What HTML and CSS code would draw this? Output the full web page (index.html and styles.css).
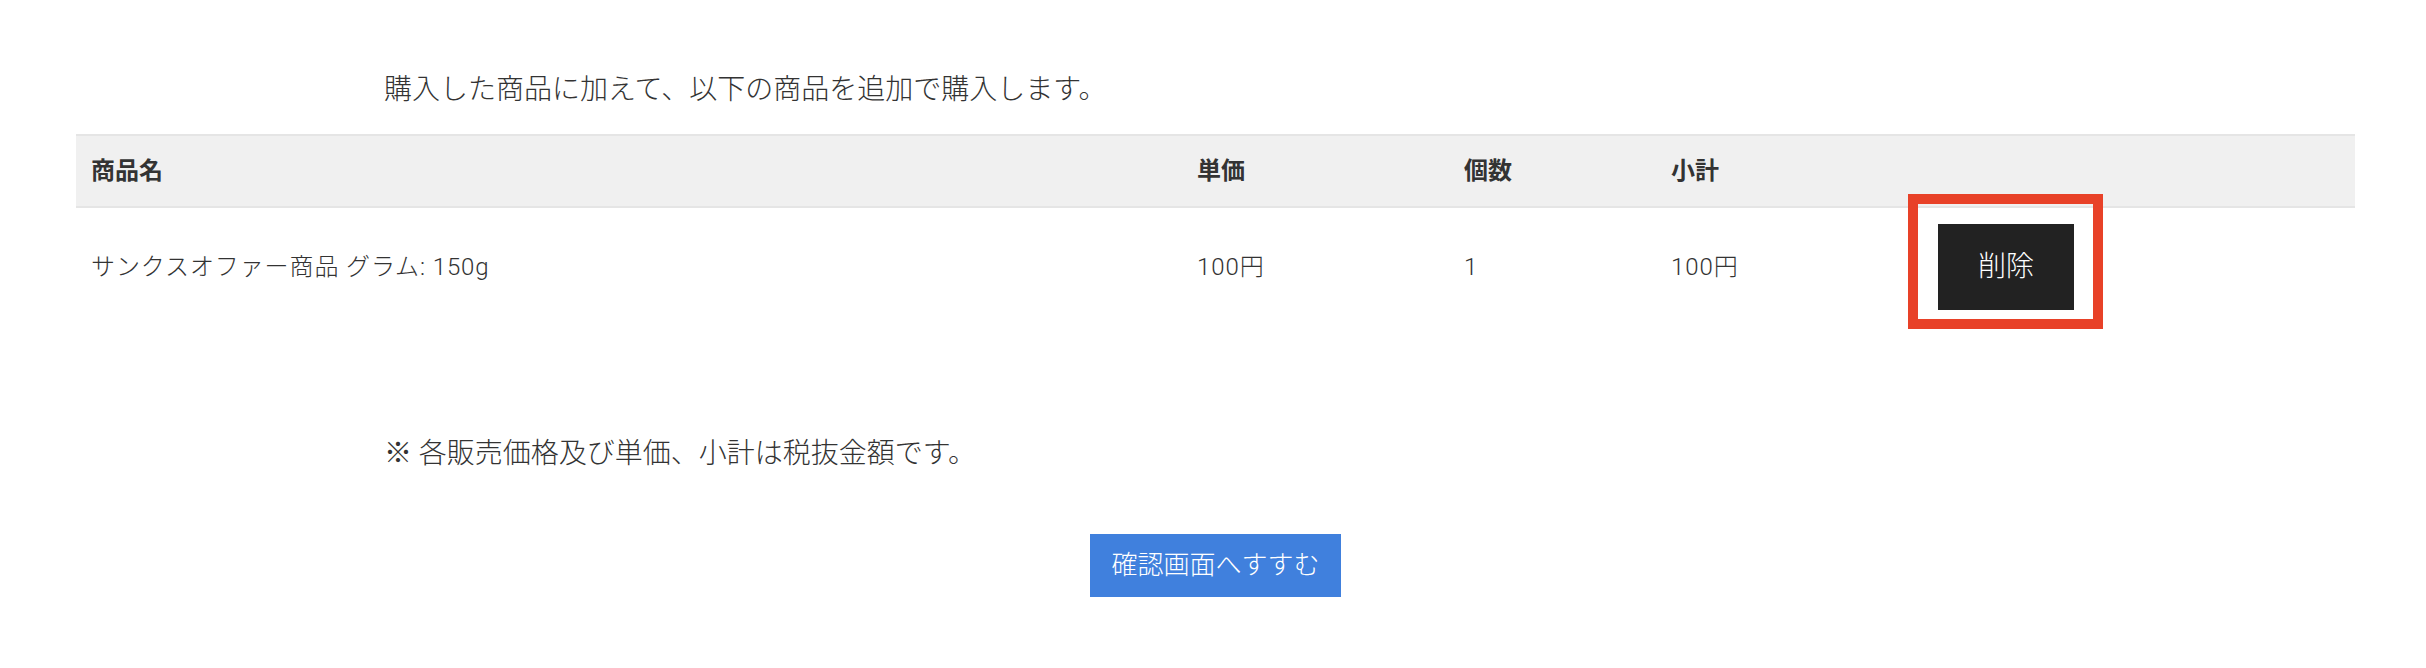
FILE: index.html
```html
<!DOCTYPE html>
<html lang="ja">
<head>
    <meta charset="UTF-8">
    <title>サンクスオファー</title>
    <link rel="stylesheet" href="styles.css">
</head>
<body>
<div class="wrap">
    <p class="lead">購入した商品に加えて、以下の商品を追加で購入します。</p>
    <table class="items">
        <thead>
            <tr>
                <th class="c-name">商品名</th>
                <th class="c-price">単価</th>
                <th class="c-qty">個数</th>
                <th class="c-sub">小計</th>
                <th class="c-act"></th>
            </tr>
        </thead>
        <tbody>
            <tr>
                <td>サンクスオファー商品 グラム: 150g</td>
                <td>100円</td>
                <td>1</td>
                <td>100円</td>
                <td><span class="mark"><button class="btn-del" type="button">削除</button></span></td>
            </tr>
        </tbody>
    </table>
    <p class="note">※ 各販売価格及び単価、小計は税抜金額です。</p>
    <div class="actions">
        <button class="btn-next" type="button">確認画面へすすむ</button>
    </div>
</div>
</body>
</html>
```

FILE: styles.css
```css
* {
    padding: 0;
    margin: 0;
    box-sizing: border-box;
}

body {
    background: #fff;
    color: #333;
    font-family: Roboto, "Noto Sans CJK JP", sans-serif;
    font-weight: 300;
}

.wrap {
    padding: 69px 71px 0 76px;
}

.lead,
.note {
    font-size: 28px;
    line-height: 42px;
    margin-left: 308px;
}

.lead {
    margin-bottom: 23px;
}

.items {
    width: 100%;
    border-collapse: collapse;
    table-layout: fixed;
}

.items th {
    background: #f0f0f0;
    border-top: 2px solid #e5e5e5;
    border-bottom: 2px solid #e5e5e5;
    text-align: left;
    font-size: 24px;
    font-weight: bold;
    line-height: 36px;
    padding: 17px 15px;
}

.items td {
    font-size: 24px;
    line-height: 36px;
    padding: 16px 15px;
    vertical-align: middle;
    letter-spacing: 0.9px;
}

.c-name { width: 1106px; }
.c-price { width: 267px; }
.c-qty { width: 207px; }
.c-sub { width: 267px; }

.mark {
    position: relative;
    display: inline-block;
    vertical-align: middle;
}

/* 注目枠 */
.mark::after {
    content: "";
    position: absolute;
    top: -30px;
    left: -30px;
    right: -29px;
    bottom: -19px;
    border: 10px solid #e84128;
}

.btn-del {
    display: block;
    border: 0;
    background: #222;
    color: #fff;
    font-family: inherit;
    font-weight: 300;
    font-size: 28px;
    line-height: 42px;
    padding: 22px 40px;
    letter-spacing: 0;
}

.note {
    margin-top: 107px;
}

.actions {
    margin-top: 59px;
    text-align: center;
}

.btn-next {
    border: 0;
    background: #4080dd;
    color: #fff;
    font-family: inherit;
    font-weight: 300;
    font-size: 26px;
    line-height: 39px;
    padding: 12px 21px;
}
```
